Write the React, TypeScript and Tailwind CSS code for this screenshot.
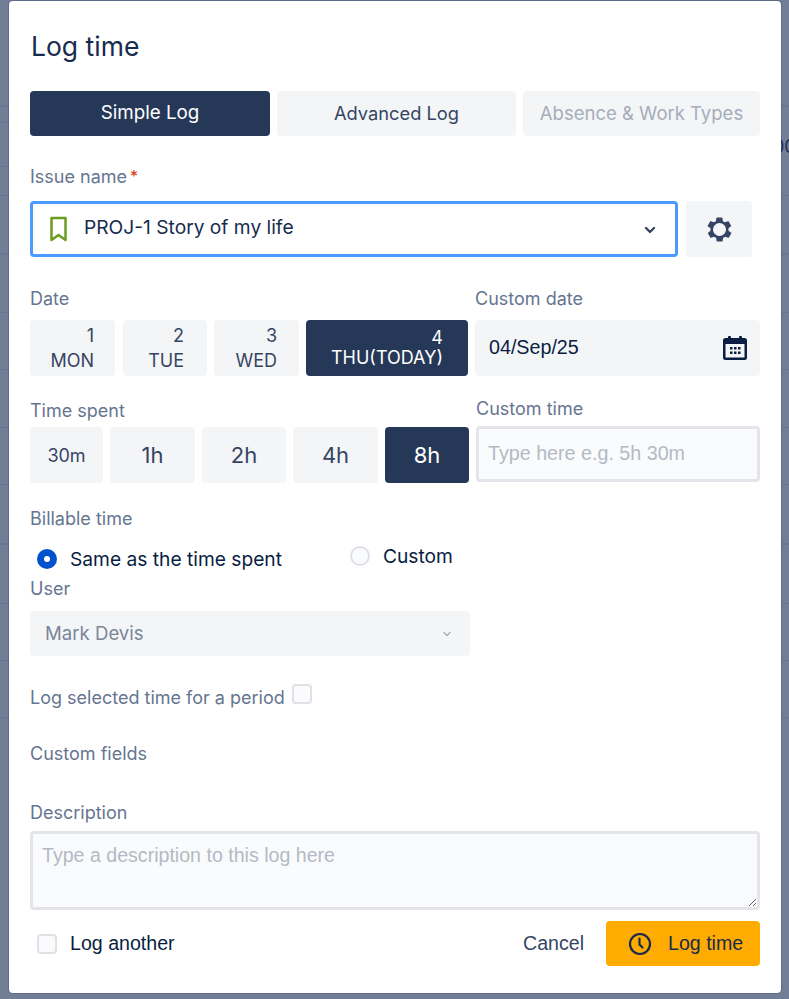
import { ChevronDown } from 'lucide-react';

const days = [
  { num: '1', name: 'MON', box: 'w-[85px] mr-px pr-[21px]' },
  { num: '2', name: 'TUE', box: 'w-[84px] pr-[23px]' },
  { num: '3', name: 'WED', box: 'w-[85px] pr-[22px]' },
];

const times = [
  { label: '30m', width: 'w-[73px] text-[18px]', active: false },
  { label: '1h', width: 'w-[85px] text-[22px]', active: false },
  { label: '2h', width: 'w-[84px] text-[22px]', active: false },
  { label: '4h', width: 'w-[85px] text-[22px]', active: false },
  { label: '8h', width: 'w-[84px] text-[22px]', active: true },
];

// rows of the page behind the dialog, some only peek out on the left
const bgLines = [
  { y: 105, cls: 'w-full h-[2px]' },
  { y: 122, cls: 'w-[9px] h-px' },
  { y: 166, cls: 'w-[9px] h-px' },
  { y: 195, cls: 'w-full h-px' },
  { y: 253, cls: 'w-full h-[2px]' },
  { y: 312, cls: 'w-full h-px' },
  { y: 369, cls: 'w-full h-px' },
  { y: 427, cls: 'w-full h-px' },
  { y: 484, cls: 'w-full h-px' },
  { y: 543, cls: 'w-full h-[2px]' },
  { y: 603, cls: 'w-full h-px' },
  { y: 660, cls: 'w-full h-px' },
  { y: 717, cls: 'w-full h-px' },
];

function Label({ children }: { children: React.ReactNode }) {
  return <div className="text-[18px] leading-[20px] text-[#667590]">{children}</div>;
}

function Gear() {
  return (
    <svg width="29" height="29" viewBox="0 0 24 24" fill="#344563">
      <path fillRule="evenodd" d="M19.4 13a7.6 7.6 0 0 0 0-2l2.1-1.6a.5.5 0 0 0 .1-.6l-2-3.5a.5.5 0 0 0-.6-.2l-2.5 1a7.5 7.5 0 0 0-1.7-1l-.4-2.6a.5.5 0 0 0-.5-.4h-4a.5.5 0 0 0-.5.4l-.4 2.6a7.5 7.5 0 0 0-1.7 1l-2.5-1a.5.5 0 0 0-.6.2l-2 3.5a.5.5 0 0 0 .1.6L4.6 11a7.6 7.6 0 0 0 0 2l-2.1 1.6a.5.5 0 0 0-.1.6l2 3.5c.1.2.4.3.6.2l2.5-1c.5.4 1.1.7 1.7 1l.4 2.6c0 .2.2.4.5.4h4c.3 0 .5-.2.5-.4l.4-2.6c.6-.3 1.2-.6 1.7-1l2.5 1c.2.1.5 0 .6-.2l2-3.5a.5.5 0 0 0-.1-.6L19.4 13zM12 17.400a5.400 5.400 0 1 1 0-10.800 5.400 5.400 0 0 1 0 10.800z" />
    </svg>
  );
}

function Calendar() {
  return (
    <svg width="26" height="26" viewBox="0 0 26 26" fill="#091e42">
      <rect x="6" y="1" width="3" height="4" rx="1" />
      <rect x="17" y="1" width="3" height="4" rx="1" />
      <path fillRule="evenodd" d="M3.5 3h19A2.5 2.5 0 0 1 25 5.5v17a2.500 2.500 0 0 1-2.500 2.500h-19A2.500 2.500 0 0 1 1 22.500v-17A2.500 2.500 0 0 1 3.500 3zM3.500 9v13.500h19V9z" />
      <rect x="8" y="12" width="2.500" height="2.500" />
      <rect x="12" y="12" width="2.500" height="2.500" />
      <rect x="16" y="12" width="2.500" height="2.500" />
      <rect x="8" y="16.500" width="2.500" height="2.500" />
      <rect x="12" y="16.500" width="2.500" height="2.500" />
      <rect x="16" y="16.500" width="2.500" height="2.500" />
    </svg>
  );
}

export default function App() {
  return (
    <div className="relative h-[999px] w-[789px] overflow-hidden bg-[#727d96] pl-[9px] pt-[1px] font-['Inter',sans-serif]">
      {/* table rows showing behind the dialog */}
      {bgLines.map((l) => (
        <div key={l.y} className={`absolute left-0 bg-[#6a7590] ${l.cls}`} style={{ top: l.y }} />
      ))}
      <span className="absolute left-[773px] top-[135px] text-[18px] leading-[24px] text-[#1f2f50]">00</span>

      <div className="relative h-[992px] w-[772px] rounded-[4px] bg-white px-[21px] pt-[27px] shadow-[0_0_0_1px_rgba(9,30,66,0.18)]">
        <h1 className="ml-px text-[26.500px] font-normal leading-[36px] text-[#172b4d]">Log time</h1>

        {/* tabs */}
        <div className="mt-[27px] flex gap-[7px]">
          <div className="flex h-[45px] w-[240px] items-center justify-center rounded-[4px] bg-[#253858] text-[18.800px] text-white">
            Simple Log
          </div>
          <div className="flex h-[45px] w-[239px] items-center justify-center rounded-[4px] bg-[#f4f5f7] text-[18.300px] text-[#344563]">
            Advanced Log
          </div>
          <div className="flex h-[45px] w-[237px] items-center justify-center rounded-[4px] bg-[#f4f5f7] text-[18.500px] text-[#a5adba]">
            Absence &amp; Work Types
          </div>
        </div>

        {/* issue name */}
        <div className="mt-[31px] flex items-start">
          <Label>Issue name</Label>
          <span className="ml-[3px] text-[16px] leading-[18px] text-[#de350b]">*</span>
        </div>
        <div className="mt-[14px] flex gap-[8px]">
          <div className="flex h-[56px] w-[648px] items-center rounded-[4px] border-[3px] border-[#4c9aff] bg-white pl-[16px] pr-[17px]">
            <svg width="19" height="26" viewBox="0 0 19 26" fill="none" stroke="#6b9e1f" strokeWidth="2.500" strokeLinejoin="round">
              <path d="M2.500 2h14v22l-7-5-7 5z" />
            </svg>
            <span className="mb-[3px] ml-[16px] flex-1 text-[19.200px] text-[#172b4d]">PROJ-1 Story of my life</span>
            <ChevronDown size={16} strokeWidth={3.500} className="mt-[2px] text-[#344563]" />
          </div>
          <div className="flex h-[56px] w-[66px] items-center justify-center rounded-[4px] bg-[#f4f5f7]">
            <Gear />
          </div>
        </div>

        {/* date + custom date */}
        <div className="mt-[32px] flex">
          <div className="w-[445px]">
            <Label>Date</Label>
            <div className="mt-[11px] flex gap-[7px]">
              {days.map((d) => (
                <div key={d.num} className={`${d.box} flex h-[56px] flex-col items-end justify-center rounded-[4px] bg-[#f4f5f7] text-[18px] leading-[25px] text-[#344563]`}>
                  <span>{d.num}</span>
                  <span>{d.name}</span>
                </div>
              ))}
              <div className="flex h-[56px] w-[162px] flex-col items-end justify-center rounded-[4px] bg-[#253858] pr-[25px] text-[18px] leading-[20px] text-white">
                <span>4</span>
                <span>THU(TODAY)</span>
              </div>
            </div>
          </div>
          <div className="w-[285px]">
            <Label>Custom date</Label>
            <div className="mt-[11px] flex h-[56px] items-center justify-between rounded-[4px] bg-[#f4f5f7] pl-[14px] pr-[12px]">
              <span className="font-['Liberation_Sans',sans-serif] text-[19.700px] text-[#091e42]">04/Sep/25</span>
              <Calendar />
            </div>
          </div>
        </div>

        {/* time spent + custom time */}
        <div className="mt-[25px] flex">
          <div className="w-[446px]">
            <Label>Time spent</Label>
            <div className="mt-[6px] flex gap-[7px]">
              {times.map((t) => (
                <div key={t.label} className={`${t.width} flex h-[56px] items-center justify-center rounded-[4px] ${t.active ? 'bg-[#253858] text-white' : 'bg-[#f4f5f7] text-[#344563]'}`}>
                  {t.label}
                </div>
              ))}
            </div>
          </div>
          <div className="-mt-[2px] w-[284px]">
            <Label>Custom time</Label>
            <div className="mt-[7px] flex h-[56px] items-center rounded-[4px] border-[3px] border-[#e3e5ea] bg-[#fafbfc] px-[9px] font-['Liberation_Sans',sans-serif] text-[19.700px] text-[#b3bac5]">
              Type here e.g. 5h 30m
            </div>
          </div>
        </div>

        {/* billable time */}
        <div className="mt-[26px]">
          <Label>Billable time</Label>
        </div>
        <div className="relative mt-[16px] flex h-[30px] items-start">
          <span className="ml-[7px] mt-[4px] flex h-[20px] w-[20px] items-center justify-center rounded-full bg-[#0052cc]">
            <span className="h-[6px] w-[6px] rounded-full bg-white" />
          </span>
          <span className="ml-[13px] text-[19.200px] leading-[28px] text-[#091e42]">Same as the time spent</span>
          <span className="ml-[68px] mt-[1px] h-[20px] w-[20px] rounded-full border-2 border-[#dfe1e6] bg-[#fafbfc]" />
          <span className="ml-[13px] -mt-[3px] text-[19.200px] leading-[28px] text-[#091e42]">Custom</span>
        </div>

        {/* user */}
        <div className="mt-[4px]">
          <Label>User</Label>
        </div>
        <div className="mt-[12px] flex h-[45px] w-[440px] items-center justify-between rounded-[4px] bg-[#f4f5f7] pl-[15px] pr-[17px] text-[18.600px] text-[#7a869a]">
          Mark Devis
          <ChevronDown size={12} strokeWidth={2.500} className="text-[#a5adba]" />
        </div>

        {/* period */}
        <div className="mt-[32px] flex items-start">
          <Label>Log selected time for a period</Label>
          <span className="ml-[7px] -mt-[4px] h-[20px] w-[20px] rounded-[4px] border-2 border-[#dfe1e6] bg-[#fafbfc]" />
        </div>

        <div className="mt-[36px]">
          <Label>Custom fields</Label>
        </div>

        {/* description */}
        <div className="mt-[39px]">
          <Label>Description</Label>
        </div>
        <textarea
          readOnly
          placeholder="Type a description to this log here"
          className="mt-[8px] block h-[79px] w-[730px] rounded-[4px] border-[3px] border-[#e3e5ea] bg-[#fafbfc] px-[9px] pb-[9px] pt-[11px] font-['Liberation_Sans',sans-serif] text-[19.600px] leading-[20px] outline-none placeholder:text-[#b3bac5]"
        />

        {/* footer */}
        <div className="mt-[11px] flex h-[45px] items-center">
          <span className="ml-[7px] h-[20px] w-[20px] rounded-[4px] border-2 border-[#dfe1e6] bg-[#fafbfc]" />
          <span className="ml-[13px] font-['Liberation_Sans',sans-serif] text-[19.600px] text-[#091e42]">Log another</span>
          <span className="ml-auto font-['Liberation_Sans',sans-serif] text-[19.600px] text-[#344563]">Cancel</span>
          <div className="ml-[22px] flex h-[45px] w-[154px] items-center rounded-[4px] bg-[#ffab00] pl-[22px] font-['Liberation_Sans',sans-serif] text-[19.600px] text-[#172b4d]">
            <svg width="24" height="24" viewBox="0 0 24 24" fill="none" stroke="#172b4d" strokeWidth="2.200" strokeLinecap="round">
              <circle cx="12" cy="12" r="10" />
              <path d="M11.500 6.500v6l3 3" />
            </svg>
            <span className="ml-[16px]">Log time</span>
          </div>
        </div>
      </div>
    </div>
  );
}
